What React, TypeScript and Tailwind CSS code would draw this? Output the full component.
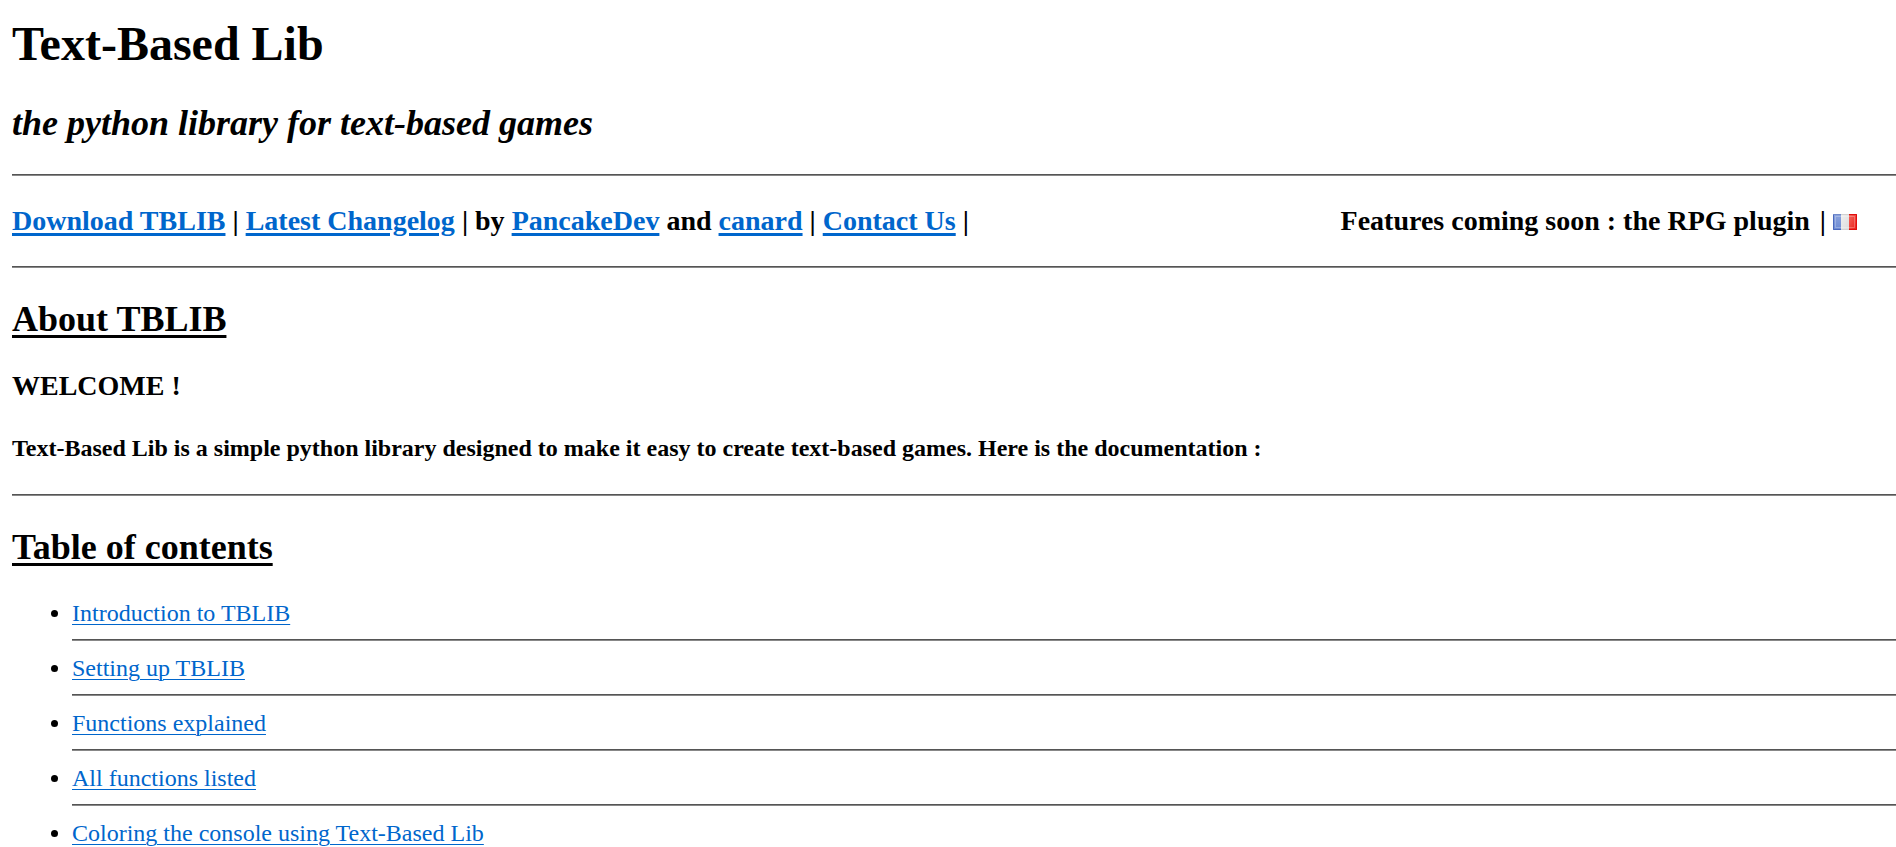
const topics = [
  "Introduction to TBLIB",
  "Setting up TBLIB",
  "Functions explained",
  "All functions listed",
  "Coloring the console using Text-Based Lib",
];

const navLink = "text-[#0066cc] underline decoration-[3px] underline-offset-[3px]";

function Rule() {
  return <hr className="my-[31px] h-0.5 border-0 border-t border-[#555555] bg-[#888888]" />;
}

function FrenchFlag() {
  return (
    <svg viewBox="0 0 24 16" className="inline-block h-4 w-6 align-baseline" aria-hidden="true">
      <defs>
        <linearGradient id="flag-blue" x1="0" y1="0" x2="0" y2="1">
          <stop offset="0" stopColor="#8ba3dd" />
          <stop offset="1" stopColor="#6c8ad3" />
        </linearGradient>
        <linearGradient id="flag-white" x1="0" y1="0" x2="1" y2="1">
          <stop offset="0" stopColor="#f0f0f0" />
          <stop offset="1" stopColor="#dcdcdc" />
        </linearGradient>
        <linearGradient id="flag-red" x1="0" y1="0" x2="1" y2="1">
          <stop offset="0" stopColor="#f4675f" />
          <stop offset="1" stopColor="#ea1c14" />
        </linearGradient>
      </defs>
      <rect width="8" height="16" fill="url(#flag-blue)" />
      <rect x="8" width="8" height="16" fill="url(#flag-white)" />
      <rect x="16" width="8" height="16" fill="url(#flag-red)" />
      <path d="M0.5 0V15.5H8" fill="none" stroke="#4a68bd" />
      <path d="M0 0.5H8" fill="none" stroke="#7089cb" />
      <path d="M8 0.5H16M8 15.5H16" fill="none" stroke="#d2d2d2" />
      <path d="M16 0.5H23.5V15.5H16" fill="none" stroke="#e00d0d" />
      <rect x="2.5" y="2.5" width="19" height="11" fill="none" stroke="#ffffff" strokeOpacity="0.25" />
    </svg>
  );
}

export default function App() {
  return (
    <main className="bg-white pt-4 pl-3 font-['Liberation_Serif',serif] text-2xl text-black">
      <h1 className="text-5xl leading-[56px] font-bold">Text-Based Lib</h1>
      <h2 className="mt-[31px] text-4xl leading-10 font-bold italic">
        the python library for text-based games
      </h2>
      <Rule />
      <nav className="flex items-baseline justify-between pr-[39px] text-[28px] leading-7 font-bold">
        <div>
          <a href="#download" className={navLink}>Download TBLIB</a> |{" "}
          <a href="#changelog" className={navLink}>Latest Changelog</a> | by{" "}
          <a href="#pancakedev" className={navLink}>PancakeDev</a> and{" "}
          <a href="#canard" className={navLink}>canard</a> |{" "}
          <a href="#contact" className={navLink}>Contact Us</a> |
        </div>
        <div className="flex items-baseline gap-2.5">
          <span>Features coming soon : the RPG plugin</span>
          <span>
            |{" "}
            <a href="#fr" aria-label="Français">
              <FrenchFlag />
            </a>
          </span>
        </div>
      </nav>
      <Rule />
      <h2 className="text-4xl leading-10 font-bold underline decoration-[3px] underline-offset-4">
        About TBLIB
      </h2>
      <h3 className="mt-[31px] text-[28px] leading-8 font-bold">WELCOME !</h3>
      <h4 className="mt-[31px] text-2xl leading-[30px] font-bold">
        Text-Based Lib is a simple python library designed to make it easy to create text-based games. Here is
        the documentation :
      </h4>
      <Rule />
      <h2 className="text-4xl leading-10 font-bold underline decoration-[3px] underline-offset-4">
        Table of contents
      </h2>
      <ul className="mt-8 list-disc pl-[60px] leading-7">
        {topics.map((topic, index) => (
          <li key={topic}>
            <a href={`#topic-${index + 1}`} className="text-[#0066cc] underline decoration-1 underline-offset-[3px]">
              {topic}
            </a>
            {index < topics.length - 1 && (
              <hr className="mt-3 mb-[13px] h-0.5 border-0 border-t border-[#555555] bg-[#888888]" />
            )}
          </li>
        ))}
      </ul>
    </main>
  );
}
